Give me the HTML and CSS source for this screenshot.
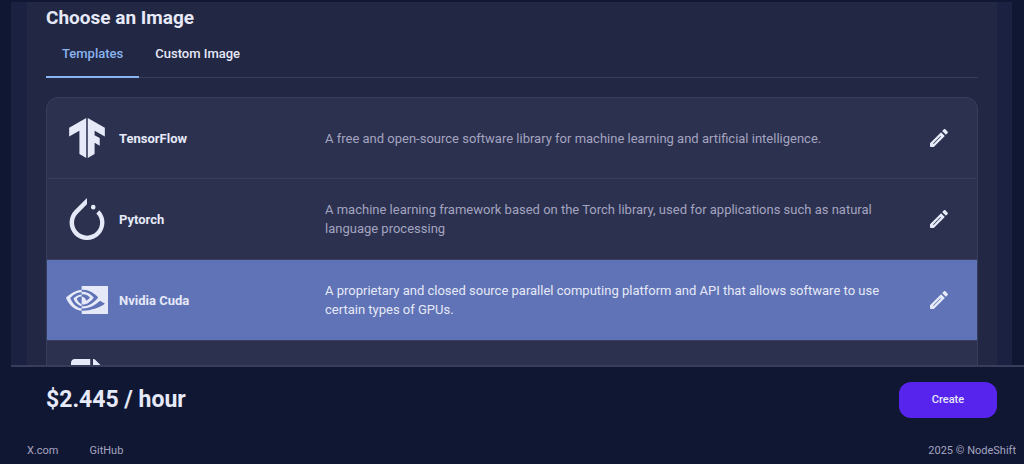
FILE: index.html
```html
<!DOCTYPE html>
<html lang="en">
<head>
  <meta charset="utf-8">
  <meta name="viewport" content="width=device-width, initial-scale=1">
  <title>NodeShift</title>
  <link rel="stylesheet" href="styles.css">
</head>
<body>
  <main class="scroll-area">
    <section class="panel">
      <h2 class="panel-title">Choose an Image</h2>
      <div class="tabs" role="tablist">
        <button class="tab active" type="button" role="tab" aria-selected="true">Templates</button>
        <button class="tab" type="button" role="tab" aria-selected="false">Custom Image</button>
      </div>

      <ul class="templates">
        <li class="template">
          <input class="template-radio" type="radio" name="template" id="tensorflow">
          <label class="template-label" for="tensorflow">
            <svg class="logo" viewBox="0 0 24 24" width="40" height="40" aria-hidden="true"><path d="M1.292 5.856L11.54 0v24l-4.095-2.378V7.603l-6.168 3.564.015-5.31zm21.43 5.311l-.014-5.31L12.46 0v24l4.094-2.378V14.87l3.092 1.788-.018-4.618-3.074-1.756V7.603l6.168 3.564z"/></svg>
            <span class="name">TensorFlow</span>
            <span class="description">A free and open-source software library for machine learning and artificial intelligence.</span>
          </label>
          <button class="edit" type="button" aria-label="Edit TensorFlow">
            <svg viewBox="0 0 24 24" width="24" height="24"><use href="#pencil"/></svg>
          </button>
        </li>
        <li class="template">
          <input class="template-radio" type="radio" name="template" id="pytorch">
          <label class="template-label" for="pytorch">
            <svg class="logo" viewBox="0 0 24 24" width="42" height="42" aria-hidden="true"><path d="M12.005 0L4.952 7.053a9.865 9.865 0 000 14.022 9.866 9.866 0 0014.022 0c3.984-3.9 3.986-10.205.085-14.023l-1.744 1.743c2.904 2.905 2.904 7.634 0 10.538s-7.634 2.904-10.538 0-2.904-7.634 0-10.538l4.647-4.646.582-.665zm3.568 3.899a1.327 1.327 0 00-1.327 1.327 1.327 1.327 0 001.327 1.328A1.327 1.327 0 0016.9 5.226 1.327 1.327 0 0015.573 3.9z"/></svg>
            <span class="name">Pytorch</span>
            <span class="description">A machine learning framework based on the Torch library, used for applications such as natural language processing</span>
          </label>
          <button class="edit" type="button" aria-label="Edit Pytorch">
            <svg viewBox="0 0 24 24" width="24" height="24"><use href="#pencil"/></svg>
          </button>
        </li>
        <li class="template">
          <input class="template-radio" type="radio" name="template" id="cuda" checked>
          <label class="template-label" for="cuda">
            <svg class="logo" viewBox="0 0 24 24" width="42" height="42" aria-hidden="true"><path d="M8.948 8.798v-1.43a6.7 6.7 0 0 1 .424-.018c3.922-.124 6.493 3.374 6.493 3.374s-2.774 3.851-5.75 3.851c-.398 0-.787-.062-1.158-.185v-4.346c1.528.185 1.837.857 2.747 2.385l2.04-1.714s-1.492-1.952-4-1.952a6.016 6.016 0 0 0-.796.035m0-4.735v2.138l.424-.027c5.45-.185 9.01 4.47 9.01 4.47s-4.08 4.964-8.33 4.964c-.37 0-.733-.035-1.095-.097v1.325c.3.035.61.062.91.062 3.957 0 6.82-2.023 9.593-4.408.459.371 2.34 1.263 2.73 1.652-2.633 2.208-8.772 3.984-12.253 3.984-.335 0-.653-.018-.971-.053v1.864H24V4.063zm0 10.326v1.131c-3.657-.654-4.673-4.46-4.673-4.46s1.758-1.944 4.673-2.262v1.237H8.94c-1.528-.186-2.73 1.245-2.73 1.245s.68 2.412 2.739 3.11M2.456 10.9s2.164-3.197 6.5-3.533V6.201C4.153 6.59 0 10.653 0 10.653s2.35 6.802 8.948 7.42v-1.237c-4.84-.6-6.492-5.936-6.492-5.936z"/></svg>
            <span class="name">Nvidia Cuda</span>
            <span class="description">A proprietary and closed source parallel computing platform and API that allows software to use certain types of GPUs.</span>
          </label>
          <button class="edit" type="button" aria-label="Edit Nvidia Cuda">
            <svg viewBox="0 0 24 24" width="24" height="24"><use href="#pencil"/></svg>
          </button>
        </li>
        <li class="template">
          <input class="template-radio" type="radio" name="template" id="file" aria-label="File template">
          <label class="template-label" for="file">
            <svg class="logo" viewBox="0 0 384 512" width="33" height="44" aria-hidden="true"><path d="M224 136V0H44C20 0 0 20 0 44v424c0 24 20 44 44 44h296c24 0 44-20 44-44V160H248c-13.2 0-24-10.8-24-24zm160-14.1v6.1H256V0h6.1c6.4 0 12.5 2.5 17 7l97.9 98c4.5 4.5 7 10.6 7 16.9z"/></svg>
          </label>
        </li>
      </ul>
    </section>
  </main>

  <div class="checkout">
    <strong class="price">$2.445 / hour</strong>
    <button class="create" type="button">Create</button>
  </div>

  <footer class="footer">
    <nav class="links">
      <a href="#">X.com</a>
      <a href="#">GitHub</a>
    </nav>
    <span>2025 © NodeShift</span>
  </footer>

  <svg width="0" height="0" class="sprite" aria-hidden="true">
    <symbol id="pencil" viewBox="0 0 24 24">
      <path fill-rule="evenodd" d="M3 17.25V20.2q0 .8.8.8h2.95L17.81 9.94l-3.75-3.75zM13.4 10.1l.5.5L6.6 17.9l-.5-.5zM20.71 7.04c.39-.39.39-1.02 0-1.41l-2.34-2.34c-.39-.39-1.02-.39-1.41 0l-1.83 1.83 3.75 3.75z"/>
    </symbol>
  </svg>
</body>
</html>
```
FILE: styles.css
```css
:root {
  --bg: #101733;
  --line: #383d5c;
  --text: #e6e9f8;
  --muted: #a5a4c0;
  --accent: #8ab4f0;
}
* {
  box-sizing: border-box;
}
body {
  margin: 0;
  padding-top: 2px;
  height: 100vh;
  display: flex;
  flex-direction: column;
  background: var(--bg);
  color: var(--text);
  font: 13px/19px Roboto, sans-serif;
}
button {
  border: 0;
  background: none;
  color: inherit;
  font: inherit;
  cursor: pointer;
}
svg {
  display: block;
  fill: currentColor;
}
.sprite {
  display: none;
}

.scroll-area {
  flex: 1;
  min-height: 0;
  margin: 0 12px 0 11px;
  padding: 0 15px 0 16px;
  overflow-y: auto;
  scrollbar-width: none;
  background: #1b2140;
}
.panel {
  padding: 4px 19px 20px;
  background: #222743;
}
.panel-title {
  margin: 0;
  font-size: 19px;
  line-height: 24px;
  font-weight: 700;
}

.tabs {
  display: flex;
  margin-bottom: 19px;
  border-bottom: 1px solid var(--line);
}
.tab {
  height: 48px;
  margin-bottom: -1px;
  padding: 0 16px;
  border-bottom: 2px solid transparent;
  font-weight: 500;

  &.active {
    border-color: var(--accent);
    color: var(--accent);
  }
}

.templates {
  margin: 0;
  padding: 0;
  list-style: none;
  overflow: hidden;
  border: 1px solid var(--line);
  border-radius: 12px;
  background: #2b314e;
}
.template {
  display: flex;
  align-items: center;
  height: 81px;
  padding: 0 18px 0 19px;
  border-bottom: 1px solid var(--line);

  &:has(:checked) {
    background: #5f73b6;
  }
}
.template-radio {
  appearance: none;
  width: 0;
  height: 0;
  margin: 0;
}
.template-label {
  flex: 1;
  display: grid;
  grid-template-columns: 42px 195px 1fr;
  column-gap: 11px;
  align-items: center;
  cursor: pointer;
}
.logo {
  justify-self: center;
}
.name {
  font-weight: 700;
}
.description {
  color: var(--muted);

  :checked + .template-label & {
    color: var(--text);
  }
}
.edit {
  margin-left: 20px;
  padding: 8px;
}

.checkout {
  display: flex;
  justify-content: space-between;
  align-items: center;
  height: 67px;
  margin-left: 11px;
  padding: 0 27px 0 35px;
  border-top: 2px solid var(--line);
}
.price {
  font-size: 23px;
  line-height: 32px;
}
.create {
  width: 98px;
  height: 36px;
  border-radius: 12px;
  background: #5724ee;
  font-size: 11px;
  font-weight: 500;
}

.footer {
  display: flex;
  justify-content: space-between;
  padding: 9px 8px 4px 27px;
  color: var(--muted);
  font-size: 11px;
}
.links {
  display: flex;
  gap: 31px;

  a {
    color: inherit;
    text-decoration: none;
  }
}
```
